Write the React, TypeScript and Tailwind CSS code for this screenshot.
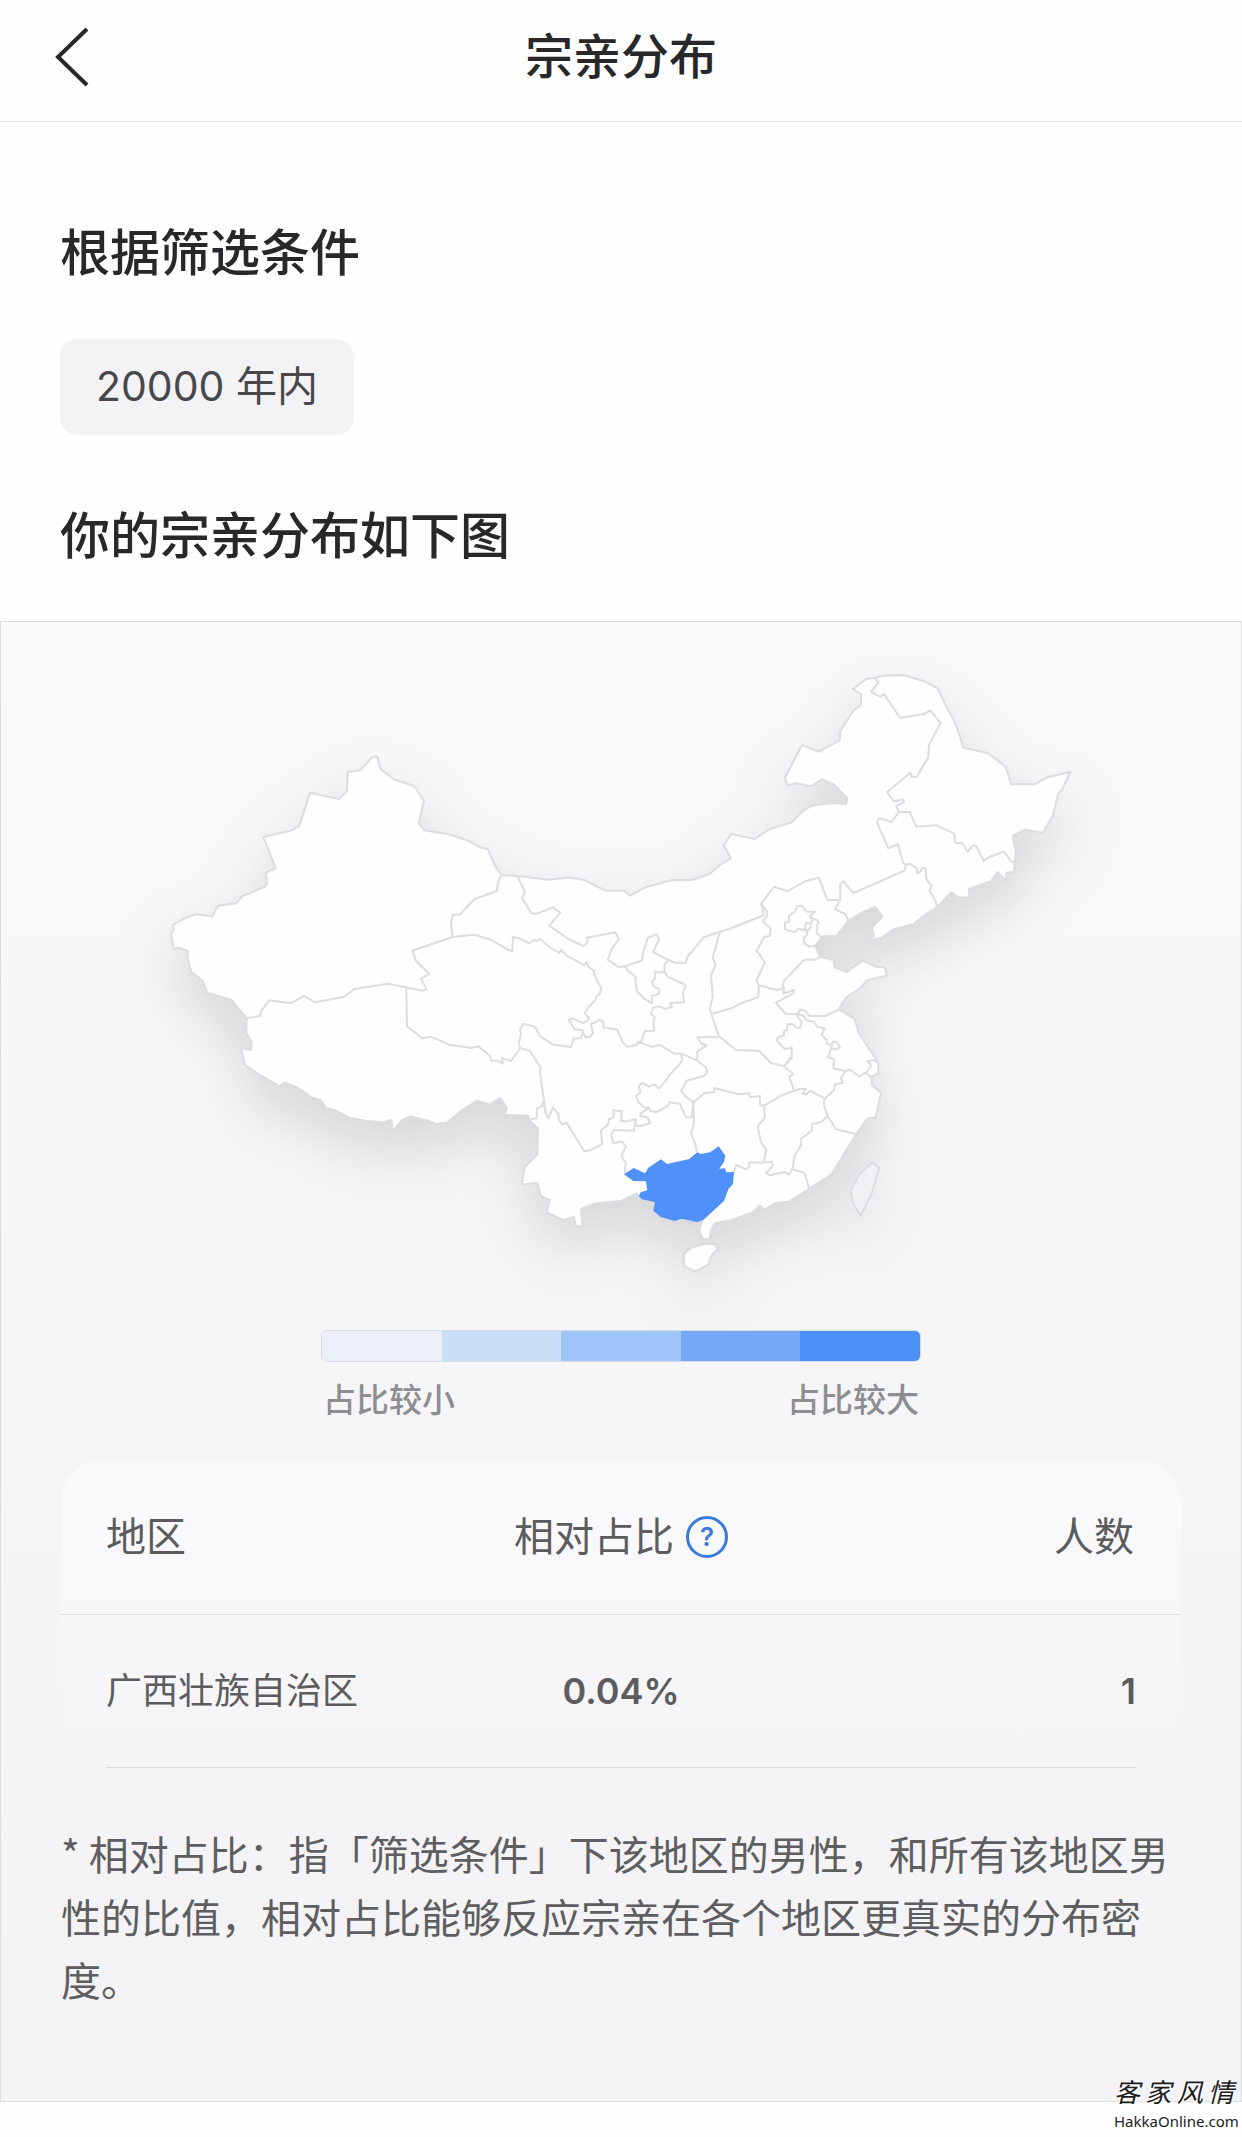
import React from "react";

type Segment = [x: number, y: number, points: string];

// Map tiles are digitised at three units per map pixel, each from its own origin.
const trace = (...segments: Segment[]) =>
  segments
    .flatMap(([ox, oy, points]) =>
      points.split(" ").map((p) => {
        const [x, y] = p.split(",").map(Number);
        return `${(ox + x / 3).toFixed(1)},${(oy + y / 3).toFixed(1)}`;
      }),
    )
    .join(" ");

const west = (p: string): Segment => [150, 720, p];
const middle = (p: string): Segment => [400, 840, p];
const east = (p: string): Segment => [660, 840, p];
const north = (p: string): Segment => [700, 660, p];
const south = (p: string): Segment => [590, 1120, p];

const mainland = trace(
  west("62,642 72,629 67,617 107,593 138,583 187,589 203,557 259,550 275,530 346,500 351,489 348,458 377,444 340,351 425,331 448,318 480,218 567,237 591,213 593,156 631,151 665,113 681,109 692,148 731,178 792,198 822,243 806,308 822,331 850,335 895,343"),
  middle("200,0 240,22 264,28 284,76 305,106 352,108 448,119 508,112 553,120 616,152 671,152 690,167 740,140 808,122"),
  east("35,121 98,119 150,101 180,75"),
  north("92,595 71,556 93,522 164,537 210,507 276,487 309,452 337,436 400,429 438,433 442,414 402,374 366,358 332,379 289,370 264,376 254,354 306,256 358,275 419,241 421,213 459,154 483,135 483,102 459,87 497,58 524,53 548,47 613,46 673,64 713,85 738,138 760,177 772,205 790,263 865,280 917,320 934,373 1005,373 1042,352 1112,335 1088,385 1074,404 1059,466 1029,518 975,509 938,528 947,575 942,636 918,638 920,662 892,636 873,664 806,687 809,713 775,712 754,697 710,742 670,768 640,793 578,809 545,833 505,844 522,827 515,804 547,770 525,741 480,760 445,784 410,827 368,829 345,858"),
  east("482,350 521,361 524,382 560,396 607,362 648,380 674,381 681,407 621,421 600,445 558,473 536,508 582,535 599,584 640,645 655,668 655,700 634,711 636,736 663,759 647,832 621,836 589,883 553,940 515,1003 447,1047 387,1085 344,1090 314,1108 300,1097 275,1118 214,1140 163,1150 152,1176 149,1197 128,1197 118,1168 127,1143 113,1146 65,1136 45,1142"),
  middle("781,1130 760,1110 766,1086 719,1072 710,1060 664,1083 590,1090 543,1107 547,1158 527,1159 522,1131 488,1140 440,1117 450,1080 423,1069 412,1028 366,1034 373,983 412,943 414,865 392,845 383,827 313,824 321,804 300,774 268,793 232,782 180,815 140,848 107,852 85,842 30,829"),
  west("757,1200 728,1234 724,1200 700,1207 650,1203 597,1193 560,1173 527,1163 513,1141 488,1134 443,1103 405,1088 388,1098 328,1065 285,1034 273,985 304,989 304,963 289,940 290,895 244,839 172,819 158,782 124,755 113,718 113,693 85,683 72,688"),
);

const borders = [
  trace(
    west("290,895 331,888 335,871 358,841 421,850 462,828 495,847 583,830 613,807 714,791 768,802 820,812 829,808 813,776 838,762 798,722 787,692"),
    middle("158,291 223,284 275,300 321,328 337,334 339,291 360,296 388,310 402,299 410,303 420,297 450,322 478,339 483,330 500,347 553,376 560,366 565,380 583,393 582,403 588,412 596,432 604,443 600,462 590,467 586,481 569,498 553,520 567,532 563,541 549,549 518,535 507,540 524,568 548,571 549,578 543,594 521,596 513,621 460,614 422,590 404,560 370,551 360,568 363,582 356,608 361,624 333,663 306,655 308,671 293,662 274,662 270,648 235,619 214,624 147,614 92,590 67,595 21,559 19,443"),
  ),
  trace(middle("305,106 297,118 290,153 224,177 179,224 158,224 153,254 158,291")),
  trace(
    middle("352,108 375,156 366,173 395,221 415,220 458,202 481,218 448,257 507,298 551,318 563,307 560,293 646,277 657,297 636,325 623,359 657,382 675,378 725,362 730,335 744,293 770,283 778,298 759,336 805,360"),
    east("45,368 78,368 82,351 131,292 180,275 210,266 311,226 304,190 343,140 382,154 435,124 477,113 502,180 541,180 541,131 550,124 580,159"),
    north("614,632 617,614"),
  ),
  trace(middle("675,378 682,390 707,412 707,432 712,454 733,476 755,490 756,468 777,461 777,446 763,442 755,425 766,415 764,397 794,397 793,375 805,360")),
  trace(
    east("14,397 25,411 74,434 77,440 69,455 72,487 29,490 37,500 15,507"),
    middle("780,499 759,503 753,522 765,532 760,547 763,572 734,573 727,596 720,608 714,605"),
  ),
  trace(
    middle("549,578 558,593 572,589 579,578 572,553 602,539 611,547 610,562 652,569 667,604 680,620 709,616 714,605 755,620 780,615 823,641"),
    east("62,640 112,662 138,682 142,697 132,708 80,722 64,752 75,767 100,787 135,758 163,757 163,744 235,763 267,760 270,772 300,768 300,795 312,797"),
  ),
  trace(middle("361,624 389,632 422,683 420,700 432,780 437,820 445,835 459,803 475,822 477,840 487,853 500,849 553,934 575,929 606,912 603,872 625,852 626,838 640,833 641,811 665,814 664,843 681,844 707,838 702,872 642,870 633,883 640,910 666,905 678,920 664,947 677,970 674,1000")),
  trace(middle("392,838 410,835 411,805 425,799 430,783 437,820")),
  trace(
    east("62,640 67,657 60,672 25,709"),
    middle("802,716 777,745 763,733 747,740 726,728 716,740 722,756 708,768 716,787 732,802 747,803 750,813 770,816 804,798"),
    east("28,787 59,791 78,832 95,832 100,787"),
  ),
  trace(middle("747,803 722,820 721,828 742,832 751,850 717,859 707,855 707,838")),
  trace(east("112,662 112,635 140,616 125,612 112,592 172,591")),
  trace(east("180,275 158,354 167,375 153,405 158,470 149,508 154,522 176,588 228,630 297,632 333,669 371,678 400,702 388,710 402,752 425,746 438,747 427,762 440,762 450,752 494,776 491,792 503,829 529,868 589,883")),
  trace(east("154,522 217,504 240,491 295,471 297,436 350,450 370,445")),
  trace(east("304,190 311,202 321,215 322,229 308,243 332,267 329,288 313,291 290,332 315,367 289,422 297,436")),
  trace(east("442,272 432,271 415,266 408,275 385,272 375,267 375,248 388,245 386,228 405,215 412,198 427,197 434,209 442,215 464,215 449,230 460,237 452,250 437,250 434,268 442,272")),
  trace(east("452,250 452,262 442,272 440,285 431,295 433,310 448,320 465,316")),
  trace(east("455,240 468,238 477,247 470,254 470,280 484,290")),
  trace(east("541,180 525,207 556,222 566,244")),
  trace(east("482,350 464,359 433,359 372,422 368,435 372,445 370,460 402,450 400,460 348,488 377,522 414,522 420,509 435,512 447,528 496,528 536,508")),
  trace(east("371,678 387,662 388,655 395,657 395,622 375,628 350,601 354,593 372,585 372,573 381,570 382,553 400,553 408,563 420,563 425,545 412,530 414,522 430,527 440,541 462,545 472,560 494,565 485,585 500,600 502,612 516,615 509,640 503,652 522,658 520,685 557,693 571,689 598,710 618,698 632,711")),
  trace(east("516,615 518,605 531,607 540,620 530,629 512,625")),
  trace(east("655,668 640,660 622,664 634,676 625,690 618,698")),
  trace(east("557,693 543,715 549,728 526,733 522,750 494,776")),
  trace(east("402,752 362,767 312,797 315,832 293,859 302,905 319,930 310,968")),
  trace(east("222,997 228,975 258,988 268,981 268,967 305,968 335,965 339,977 318,1000 330,1006 375,996 387,1004 397,988 405,944 424,915 423,896 455,873 457,852 482,847 503,829")),
  trace(east("397,988 434,998 447,1047")),
  trace(east("100,787 102,850 93,880 105,910 111,936")),
  trace(north("524,53 535,68 514,95 541,111 552,102 600,173 670,163 691,152 722,189 687,255 685,292 650,350 635,350 631,338 561,396 582,424 610,418 613,426 589,438 596,456 629,456 649,500 708,496 762,520 765,548 787,550 803,575 819,556 828,557 851,603 870,590 911,575 935,606 942,607")),
  trace(north("596,456 575,486 537,474 531,487 565,565 594,552 609,608 617,614 630,611 650,625 652,640 662,635 665,625 676,624 680,660 695,678 689,692 708,725 710,742")),
];

const guangxi = trace(
  south("102,163 131,144 165,160 175,143 213,118 231,132 298,117 322,97 332,102 360,97 386,79 406,107 402,125 388,146 405,145 409,157 432,156 429,192 415,208 402,243 375,268 340,300 322,306 275,296 254,303 212,291 190,272 195,246 155,238 147,229 150,218 172,210 168,184 130,183"),
);
const hainan = trace(south("281,403 302,384 342,372 375,372 383,388 365,406 355,433 317,454 283,440"));
const taiwan = trace(south("847,127 868,143 845,220 812,288 788,248 782,213 806,165"));

function DistributionMap() {
  return (
    <svg viewBox="1 622 1240 708" className="block h-auto w-full" role="img" aria-label="宗亲分布地图">
      <defs>
        <filter id="shade" x="-20%" y="-20%" width="140%" height="150%" colorInterpolationFilters="sRGB">
          <feDropShadow dx="0" dy="28" stdDeviation="29" floodColor="#3c3c43" floodOpacity="0.17" />
        </filter>
      </defs>
      <g filter="url(#shade)" stroke="#dcdce1" strokeWidth="2" strokeLinejoin="round">
        <polygon points={mainland} fill="#fefefe" />
        <polygon points={hainan} fill="#fefefe" />
        <polygon points={taiwan} fill="#f1f1f3" />
      </g>
      <g fill="none" stroke="#dcdce1" strokeWidth="2" strokeLinejoin="round">
        {borders.map((points) => (
          <polyline key={points} points={points} />
        ))}
      </g>
      <polygon points={guangxi} fill="#4f91f8" />
    </svg>
  );
}

const steps = ["bg-[#eaeff9]", "bg-[#cadef7]", "bg-[#9ec4f8]", "bg-[#75a9f7]", "bg-[#4b90f6]"];

function Legend() {
  return (
    <div className="mx-auto w-[600px] max-w-full">
      <div className="flex h-8 overflow-hidden rounded-md border border-[#d9dce4]">
        {steps.map((step) => (
          <div key={step} className={`flex-1 ${step}`} />
        ))}
      </div>
      <div className="mt-4 flex justify-between px-0.5 text-[33px] leading-[44px] font-medium text-[#8e8e92]">
        <span>占比较小</span>
        <span>占比较大</span>
      </div>
    </div>
  );
}

function RegionTable() {
  return (
    <table className="w-full table-fixed rounded-t-[40px] bg-linear-to-b from-[#fafafc] to-[#fafafc]/0 text-[#5c5c5e]">
      <thead>
        <tr className="h-[153px] border-b border-[#dcdcdf] text-[40px]">
          <th scope="col" className="pl-[45px] text-left font-normal">地区</th>
          <th scope="col" className="p-0 font-normal">
            <div className="flex items-center justify-center gap-3">
              <span>相对占比</span>
              <button type="button" aria-label="相对占比说明" className="flex size-[42px] items-center justify-center rounded-full border-[3px] border-[#3b7add] text-[26px] leading-none font-semibold text-[#3b7add]">
                ?
              </button>
            </div>
          </th>
          <th scope="col" className="pr-[47px] text-right font-normal">人数</th>
        </tr>
      </thead>
      <tbody>
        <tr className="text-[36px] leading-[152px]">
          <td className="p-0 pl-[45px]">
            <div className="border-b border-[#dcdcdf]">广西壮族自治区</div>
          </td>
          <td className="p-0">
            <div className="border-b border-[#dcdcdf] text-center font-semibold">0.04%</div>
          </td>
          <td className="p-0 pr-[45px]">
            <div className="border-b border-[#dcdcdf] text-right font-semibold">1</div>
          </td>
        </tr>
      </tbody>
    </table>
  );
}

function Watermark() {
  return (
    <div className="absolute right-2 bottom-1.5 w-[120px] text-[#1c1c1c]">
      <div className="flex justify-between text-[26px] leading-9 italic [text-shadow:0_0_2px_#fff,0_0_3px_#fff,0_0_4px_#fff]">
        <span>客</span>
        <span>家</span>
        <span>风</span>
        <span>情</span>
      </div>
      <div className="text-center font-['Noto_Sans'] text-[15px] leading-5">HakkaOnline.com</div>
    </div>
  );
}

export default function App() {
  return (
    <div className="relative bg-[#fefefe] pb-[35px] font-['Inter','Noto_Sans_CJK_SC',sans-serif] text-[#28282a]">
      <header className="grid h-[122px] grid-cols-[1fr_auto_1fr] items-center border-b border-[#e3e3e5] pb-2">
        <button type="button" aria-label="返回" className="ml-[54px] w-9">
          <svg viewBox="0 0 36 60" className="block h-[60px] w-9" fill="none" stroke="currentColor" strokeWidth="4">
            <path d="M33 2 4 30 33 58" />
          </svg>
        </button>
        <h1 className="text-[48px] leading-[68px] font-medium">宗亲分布</h1>
      </header>

      <section className="px-[60px] pt-24 pb-[50px]">
        <h2 className="text-[50px] leading-[70px] font-medium">根据筛选条件</h2>
        <button type="button" className="mt-[51px] block h-24 rounded-[18px] bg-[#f3f3f6] px-9 text-[41px] text-[#48484a]">
          20000 年内
        </button>
        <h2 className="mt-[66px] text-[50px] leading-[70px] font-medium">你的宗亲分布如下图</h2>
      </section>

      <section className="border border-[#dddddf] bg-linear-to-b from-[#f9f9fb] to-[#f3f3f5] pb-[90px]">
        <DistributionMap />
        <Legend />
        <div className="mt-[39px] px-[60px]">
          <RegionTable />
          <p className="mt-[54px] pr-1 font-['Noto_Sans_CJK_SC',sans-serif] text-[40px] leading-[63px] text-[#5e5e60]">
            * 相对占比：指「筛选条件」下该地区的男性，和所有该地区男性的比值，相对占比能够反应宗亲在各个地区更真实的分布密度。
          </p>
        </div>
      </section>
      <Watermark />
    </div>
  );
}
